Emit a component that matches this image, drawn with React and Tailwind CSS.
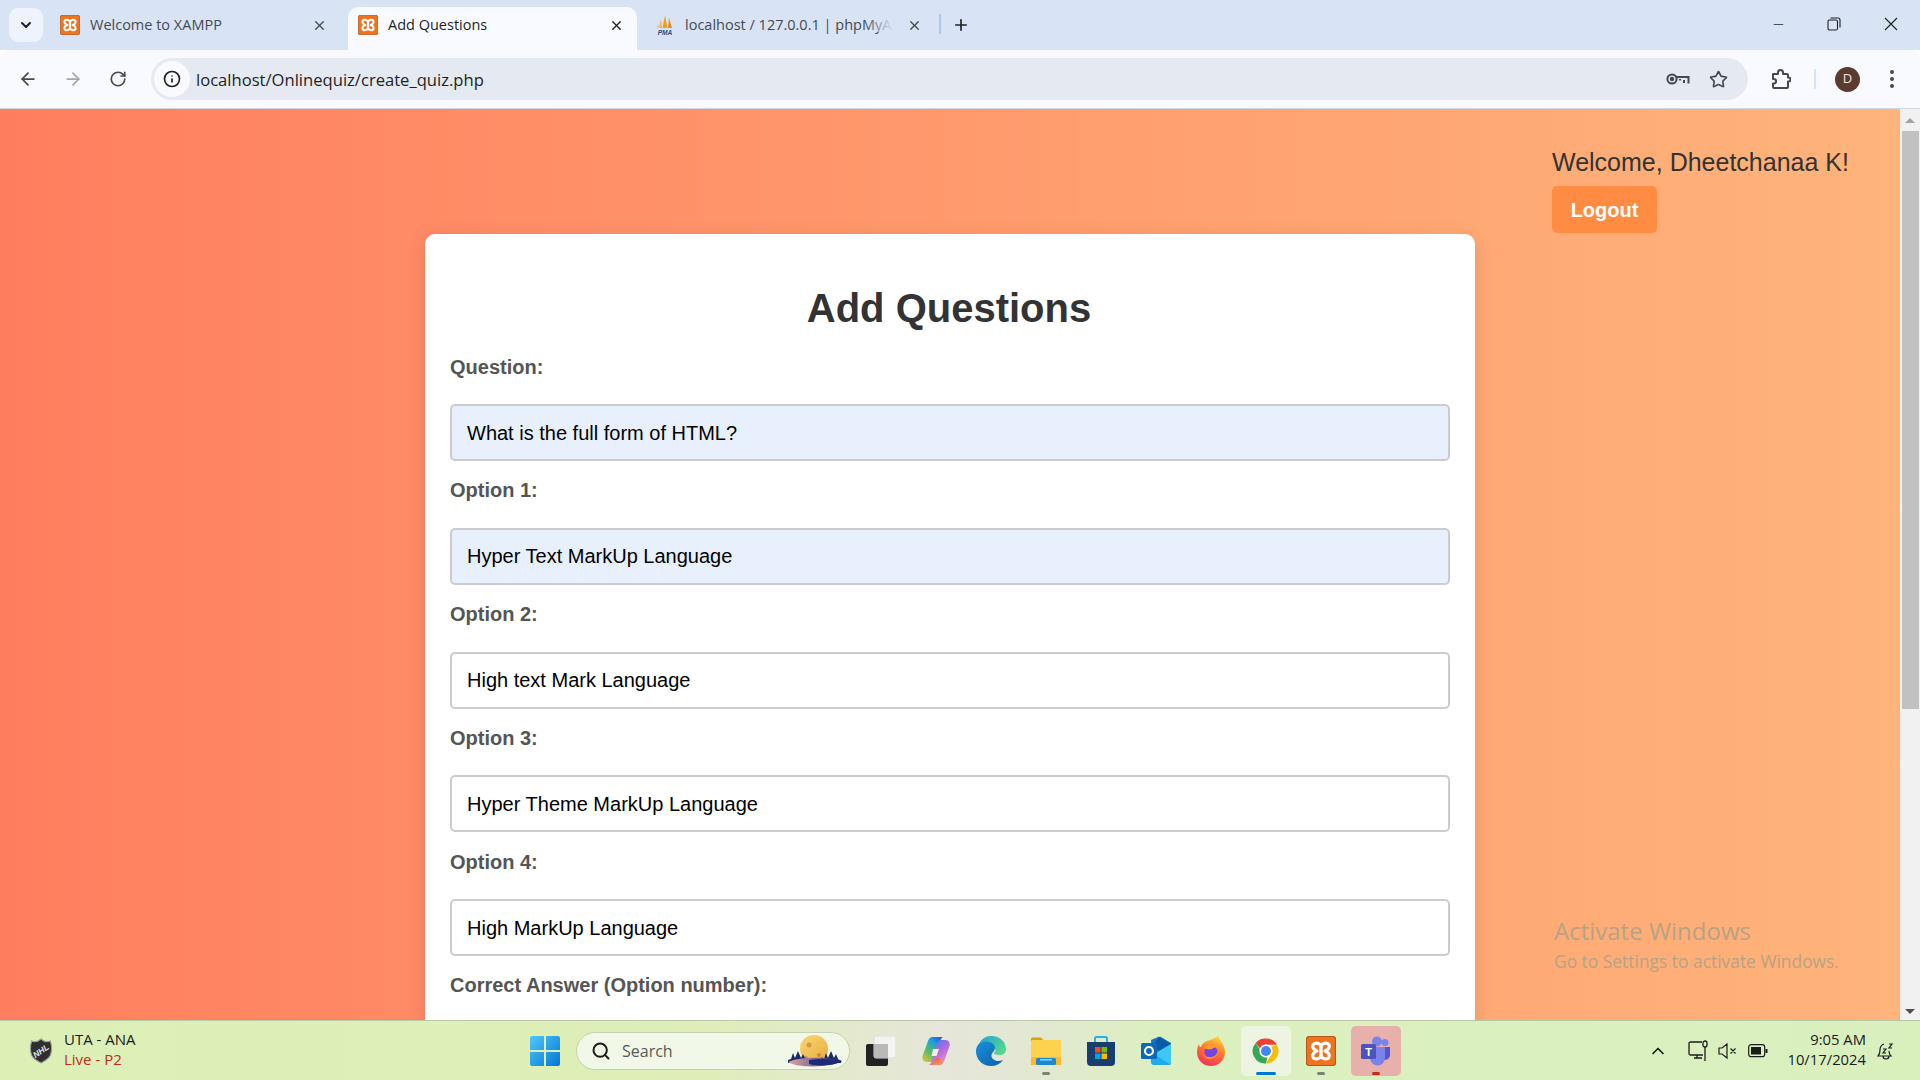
import React from "react";
import { ArrowLeft, ArrowRight, RotateCw, Info, Star, X, Plus, ChevronDown, ChevronUp, Search, Minus } from "lucide-react";

const XamppIcon = ({ size = 20 }) => (
  <svg width={size} height={size} viewBox="0 0 30 30">
    <rect x="0.5" y="0.5" width="29" height="29" rx="2.5" fill="#ee7420" />
    <rect x="0.5" y="0.5" width="29" height="29" rx="2.5" fill="none" stroke="#b5591c" strokeWidth="1.2" />
    <path d="M15 9.500C13 7 8.500 6 7 8.800 5.800 11.500 8 14 11 15 8 16 5.800 18.500 7 21.200 8.500 24 13 23 15 20.500 17 23 21.500 24 23 21.200 24.200 18.500 22 16 19 15 22 14 24.200 11.500 23 8.800 21.500 6 17 7 15 9.500Z" fill="none" stroke="#fff" strokeWidth="3.200" strokeLinejoin="round" />
    <path d="M15 9v12" stroke="#fff" strokeWidth="3.400" />
  </svg>
);

const PmaIcon = () => (
  <svg width="20" height="20" viewBox="0 0 20 20">
    <path d="M10 0l2.500 13h-5z" fill="#f29c1f" />
    <path d="M6 4L4 13h3z" fill="#f5b14a" />
    <path d="M14 3l3 10h-4z" fill="#e88a12" />
    <path d="M3 9l-1.500 4H4z" fill="#f7c272" />
    <text x="10" y="19.500" textAnchor="middle" fontSize="6.600" fontWeight="700" fontStyle="italic" fill="#24508a" fontFamily="Liberation Sans, sans-serif">PMA</text>
  </svg>
);

const Tab = ({ icon, title, active, fade, closeCls }) => (
  <div className={`relative flex items-center h-[43px] rounded-t-[10px] pl-[10px] pr-[13px] pb-[7px] ${active ? "bg-[#f8faff] text-[#1f1f1f]" : "text-[#454a52]"} w-[289px]`}>
    {icon}
    <div className={`ml-[10px] flex-1 overflow-hidden whitespace-nowrap text-[14.5px] ${fade ? "mr-[13px]" : ""}`}>{title}</div>
    {fade && <div className="absolute right-[41px] top-[3px] h-[22px] w-[28px] bg-gradient-to-r from-[#d8e4f6]/0 to-[#d8e4f6]" />}
    <X size={15} strokeWidth={2.2} className={closeCls} />
  </div>
);

const Field = ({ label, value, filled }) => (
  <div className="h-[123.8px] flex flex-col">
    <div className="h-[37px] flex items-center text-[20px] font-bold text-[#555555] leading-none mt-[-1px]">{label}</div>
    <div className={`mt-[19px] h-[57px] w-[1000px] shrink-0 rounded-[5px] border-2 border-[#cccccc] flex items-center px-[15px] text-[20px] text-[#000000] ${filled ? "bg-[#e8f0fe]" : "bg-white"}`}>{value}</div>
  </div>
);

const Indicator = ({ cls }) => <div className={`absolute bottom-[1px] left-1/2 -translate-x-1/2 h-[3px] rounded-full ${cls}`} />;

const TaskItem = ({ children, bg, ind }) => (
  <div className={`relative w-[50px] h-[50px] flex items-center justify-center rounded-[5px] mx-[2.5px] ${bg || ""}`}>
    {children}
    {ind && <Indicator cls={ind} />}
  </div>
);

export default function App() {
  return (
    <div className="w-[1920px] h-[1080px] overflow-hidden flex flex-col bg-white font-['Liberation_Sans',sans-serif]">
      {/* tab strip */}
      <div className="h-[50px] bg-[#d8e4f6] flex items-end font-['Open_Sans',sans-serif] shrink-0">
        <div className="self-start mt-[8px] ml-[9px] w-[34px] h-[34px] rounded-[9px] bg-[#eef3fd] flex items-center justify-center">
          <ChevronDown size={16} strokeWidth={3} className="text-[#1f1f1f]" />
        </div>
        <div className="ml-[7px]">
          <Tab icon={<XamppIcon />} title="Welcome to XAMPP" closeCls="text-[#454a52] mr-[-1px]" />
        </div>
        <div className="ml-[9px] w-[289px]">
          <Tab active icon={<XamppIcon />} title="Add Questions" closeCls="text-[#1f1f1f]" />
        </div>
        <div className="ml-[8px] flex items-center h-[43px]">
          <div className="w-[289px] shrink-0 -mr-[1px]">
            <Tab fade icon={<PmaIcon />} title="localhost / 127.0.0.1 | phpMyAdmin" closeCls="text-[#454a52] ml-[1px] mr-[-1px]" />
          </div>
        </div>
        <div className="self-start mt-[14px] ml-[6px] w-[2px] h-[20px] bg-[#a8c7fa]" />
        <Plus size={18} strokeWidth={2.2} className="self-start mt-[16px] ml-[11px] text-[#1f1f1f]" />
        <div className="flex-1" />
        <div className="self-start h-[50px] flex items-center text-[#1f1f1f]">
          <Minus size={15} strokeWidth={1.2} className="mr-[41px] mb-[2px]" />
          <svg width="14" height="14" viewBox="0 0 14 14" className="mr-[43px] mb-[2px]" fill="none" stroke="#1f1f1f" strokeWidth="1.1">
            <rect x="1" y="3" width="9.500" height="10" rx="1.600" />
            <path d="M3.500 1h7.500A2 2 0 0 1 13 3v7.500" />
          </svg>
          <svg width="14" height="14" viewBox="0 0 14 14" className="mr-[22px] mb-[2px]" stroke="#1f1f1f" strokeWidth="1.1"><path d="M1 1l12 12M13 1L1 13" /></svg>
        </div>
      </div>

      {/* toolbar */}
      <div className="h-[59px] bg-[#f8faff] rounded-t-[10px] border-b border-[#d3d7de] flex items-center shrink-0 font-['Open_Sans',sans-serif]">
        <ArrowLeft size={20} strokeWidth={2.1} className="ml-[18px] text-[#45494f]" />
        <ArrowRight size={20} strokeWidth={2.1} className="ml-[25px] text-[#a4a7ac]" />
        <RotateCw size={18} strokeWidth={2.2} className="ml-[26px] text-[#45494f]" />
        <div className="ml-[24px] w-[1597px] h-[42px] rounded-full bg-[#e4e9f2] flex items-center pl-[3px] pr-[20px]">
          <div className="w-[36px] h-[36px] rounded-full bg-[#f8faff] flex items-center justify-center">
            <Info size={18} strokeWidth={2.2} className="text-[#1f1f1f]" />
          </div>
          <div className="ml-[6px] pt-[2px] text-[16.6px] text-[#1f1f1f] flex-1">localhost/Onlinequiz/create_quiz.php</div>
          <svg width="24" height="14" viewBox="0 0 24 14" fill="none" stroke="#45494f" strokeWidth="2" className="mr-[19px]">
            <circle cx="6" cy="7" r="4.600" />
            <circle cx="6" cy="7" r="1.200" fill="#45494f" />
            <path d="M10.500 5h12v6.500M18 11V8M14 8.500V7" />
          </svg>
          <Star size={19} strokeWidth={2.1} className="text-[#45494f]" />
        </div>
        <svg width="20" height="20" viewBox="0 0 20 20" fill="none" stroke="#45494f" strokeWidth="2" className="ml-[23px]">
          <path d="M2 5H7V3.500a2.500 2.500 0 0 1 5 0V5h4a1 1 0 0 1 1 1v2.500h.5a2 2 0 0 1 0 4H17V18a1 1 0 0 1-1 1H3a1 1 0 0 1-1-1v-3.500h.8a2.200 2.200 0 0 0 0-4.500H2z" strokeLinejoin="round" />
        </svg>
        <div className="ml-[23px] w-[2px] h-[20px] bg-[#d3e3fd]" />
        <div className="ml-[19px] w-[25px] h-[25px] rounded-full bg-[#5b3a30] text-[#f0e6e0] text-[13px] flex items-center justify-center">D</div>
        <svg width="6" height="20" viewBox="0 0 6 20" fill="#45494f" className="ml-[29px]">
          <circle cx="3" cy="3" r="2" /><circle cx="3" cy="10" r="2" /><circle cx="3" cy="17" r="2" />
        </svg>
      </div>

      {/* page */}
      <div className="relative flex-1 flex min-h-0">
        <div className="w-[1900px] h-full overflow-hidden bg-gradient-to-r from-[#ff7e5f] to-[#feb47b]">
          <div className="flex flex-col items-end pr-[48px] pt-[38px] h-[125px]">
            <div className="w-[300px]">
              <div className="text-[25px] leading-[30px] text-[#333333]">Welcome, Dheetchanaa K!</div>
              <div className="mt-[9px] w-[105px] h-[47px] rounded-[5px] bg-[#ff8c42] text-white font-bold text-[20px] flex items-center justify-center">Logout</div>
            </div>
          </div>
          <div className="mx-auto w-[1050px] bg-white rounded-t-[10px] shadow-[0_4px_20px_rgba(0,0,0,0.1)] px-[25px] pt-[49px] min-h-[900px]">
            <h1 className="text-[40px] leading-[50px] font-bold text-[#333333] text-center mb-[16px] pr-[2px]">Add Questions</h1>
            <Field label="Question:" value="What is the full form of HTML?" filled />
            <Field label="Option 1:" value="Hyper Text MarkUp Language" filled />
            <Field label="Option 2:" value="High text Mark Language" />
            <Field label="Option 3:" value="Hyper Theme MarkUp Language" />
            <Field label="Option 4:" value="High MarkUp Language" />
            <Field label="Correct Answer (Option number):" value="" />
          </div>
        </div>
        <div className="w-[20px] h-full bg-[#f1f1f1] flex flex-col items-center">
          <div className="mt-[9px] w-0 h-0 border-x-[5px] border-x-transparent border-b-[5px] border-b-[#a3a3a3]" />
          <div className="mt-[8px] w-[17px] h-[578px] bg-[#c1c1c1]" />
          <div className="flex-1" />
          <div className="mb-[6px] w-0 h-0 border-x-[5px] border-x-transparent border-t-[5px] border-t-[#505050]" />
        </div>
        <div className="absolute left-[1554px] top-[806px] text-[#b8a284] font-['Open_Sans',sans-serif]">
          <div className="text-[24px] leading-[32px]">Activate Windows</div>
          <div className="text-[17.4px] leading-[20px] mt-[4px]">Go to Settings to activate Windows.</div>
        </div>
      </div>

      {/* taskbar */}
      <div className="h-[60px] shrink-0 border-t border-[#b9c6a8] bg-[linear-gradient(90deg,#dcf0b6_0%,#dfeeb8_36%,#e6e6da_49%,#e2e8d2_54%,#dcefc0_60%,#d9f0bd_100%)] flex items-center font-['Open_Sans',sans-serif] relative">
        <svg width="24" height="26" viewBox="0 0 26 28" className="ml-[29px]">
          <path d="M13 1c2 2 4 3 7 3 1 0 2 0 3-1 2 6 2 11 0 16-2 4-6 6-10 8-4-2-8-4-10-8C1 14 1 9 3 3c1 1 2 1 3 1 3 0 5-1 7-3z" fill="#2e2e2e" stroke="#9a9a9a" strokeWidth="1.200" />
          <text x="13" y="17" textAnchor="middle" fontSize="9" fontWeight="700" fontStyle="italic" fill="#e4e4e4" fontFamily="Liberation Sans, sans-serif" transform="rotate(-35 13 14)">NHL</text>
        </svg>
        <div className="ml-[11px] text-[15px] leading-[20px] w-[120px] -mt-[3px]">
          <div className="text-[#1b1b1b]">UTA - ANA</div>
          <div className="text-[#c42b1c]">Live - P2</div>
        </div>
        <svg width="30" height="30" viewBox="0 0 30 30" className="ml-[346px]">
          <defs>
            <linearGradient id="wl" x1="0" y1="0" x2="1" y2="1"><stop offset="0" stopColor="#4fc8fb" /><stop offset="1" stopColor="#0078d4" /></linearGradient>
          </defs>
          <path d="M0 2a2 2 0 0 1 2-2h12v14H0zM16 0h12a2 2 0 0 1 2 2v12H16zM0 16h14v14H2a2 2 0 0 1-2-2zM16 16h14v12a2 2 0 0 1-2 2H16z" fill="url(#wl)" />
        </svg>
        <div className="ml-[16px] w-[274px] h-[38px] rounded-full bg-[#f2f8e8] border border-[#c4d3ae] flex items-center relative">
          <Search size={20} strokeWidth={2.4} className="ml-[14px] text-[#1b1b1b]" />
          <span className="ml-[11px] text-[16px] text-[#555b55]">Search</span>
          <svg width="56" height="36" viewBox="0 0 56 36" className="absolute right-[6px] top-0">
            <defs>
              <linearGradient id="mn" x1="0" y1="0" x2="1" y2="1"><stop offset="0" stopColor="#f8d873" /><stop offset="1" stopColor="#e9a93f" /></linearGradient>
              <linearGradient id="gr" x1="0" y1="0" x2="1" y2="0"><stop offset="0" stopColor="#e8a39a" /><stop offset="0.5" stopColor="#7a6a9a" /><stop offset="1" stopColor="#1c2c74" /></linearGradient>
            </defs>
            <circle cx="27" cy="16" r="14" fill="url(#mn)" />
            <circle cx="22" cy="12" r="2.500" fill="#d89a3a" />
            <circle cx="35" cy="12" r="2.200" fill="#eec25f" />
            <circle cx="32" cy="22" r="2" fill="#d9853a" />
            <circle cx="19" cy="25" r="2" fill="#d9853a" />
            <path d="M1 27l3-1 2-6 2 5 3-7 3 7 2-4 3 6v3H1z" fill="#182a64" />
            <path d="M33 27l2-3 2 2 2-6 2 5 3-7 3 7 2-4 2 5 3 2v2H33z" fill="#182a64" />
            <path d="M1 29c14-6 40-5 54-1-8 6-44 8-54 1z" fill="url(#gr)" />
            <path d="M22 27c12-2 24-1 33 1-6 4-22 6-33 3z" fill="#1c2c74" />
          </svg>
        </div>
        <div className="ml-[3px] flex items-center">
          <TaskItem>
            <svg width="30" height="30" viewBox="0 0 30 30">
              <rect x="0" y="8" width="22" height="22" rx="2" fill="#222" />
              <rect x="8" y="0" width="22" height="22" rx="2" fill="#f6f6f6" fillOpacity="0.85" stroke="#ddd" />
              <rect x="8" y="8" width="14" height="14" fill="#b9b9b9" />
            </svg>
          </TaskItem>
          <TaskItem>
            <svg width="30" height="30" viewBox="0 0 30 30">
              <defs>
                <linearGradient id="c1" x1="0" y1="1" x2="0.7" y2="0"><stop offset="0" stopColor="#f4c72f" /><stop offset="0.4" stopColor="#5cbf5f" /><stop offset="0.8" stopColor="#1f9be0" /><stop offset="1" stopColor="#2566d8" /></linearGradient>
                <linearGradient id="c2" x1="0.2" y1="0" x2="0.8" y2="1"><stop offset="0" stopColor="#4a7ae8" /><stop offset="0.5" stopColor="#b86ae0" /><stop offset="1" stopColor="#f2a0c0" /></linearGradient>
                <linearGradient id="c3" x1="0" y1="0" x2="1" y2="1"><stop offset="0" stopColor="#e8503a" /><stop offset="1" stopColor="#f9a070" /></linearGradient>
              </defs>
              <path d="M19 1h-7C9 1 7.500 3 6.800 5.500L1.500 20c-1 3 1 6 4 6H10c2 0 3.500-1.500 4-3.500L19 6c.5-2.500 1.500-4 3-5z" fill="url(#c1)" />
              <path d="M11 29h7c3 0 4.500-2 5.500-4.500L28.500 10c1-3-1-6-4-6H20c-2 0-3.500 1.500-4 3.500L11 24c-.5 2.500-1.500 4-3 5z" fill="url(#c2)" />
              <path d="M8 29h10c1.500 0 3-.5 4-2l-4-5h-3l-2 3c-1 2-2 3.500-5 4z" fill="url(#c3)" />
              <path d="M12 13h6l-2.500 7h-5z" fill="#f8f2ee" />
            </svg>
          </TaskItem>
          <TaskItem>
            <svg width="30" height="30" viewBox="0 0 30 30">
              <defs>
                <linearGradient id="e1" x1="0" y1="0" x2="1" y2="0.6"><stop offset="0" stopColor="#1b9de2" /><stop offset="1" stopColor="#52d88a" /></linearGradient>
                <linearGradient id="e2" x1="0" y1="0" x2="1" y2="1"><stop offset="0" stopColor="#1a8fdc" /><stop offset="1" stopColor="#0f5fa8" /></linearGradient>
              </defs>
              <path d="M15 0C24 0 30 6 30 13c0 4-3 6-7 6-3 0-5-1-5-2 1-1 2-2 1-4-2-4-9-5-13-2-3 2-5 5-6 7C1 8 6 0 15 0z" fill="url(#e1)" />
              <path d="M0 15c0-7 7-11 13-9 6 1 7 6 5 9-2 2-4 5-1 8 2 2 6 3 10 1-3 4-7 6-12 6C7 30 0 24 0 15z" fill="url(#e2)" />
            </svg>
          </TaskItem>
          <TaskItem ind="w-[8px] bg-[#7c8272]">
            <svg width="30" height="30" viewBox="0 0 30 30">
              <path d="M0 3a1.500 1.500 0 0 1 1.500-1.500H10L13 5H0z" fill="#d9a010" />
              <rect x="0" y="4" width="30" height="25" rx="1.500" fill="#ffd24d" />
              <rect x="0" y="21" width="30" height="8" fill="#fdb92e" />
              <rect x="5" y="22" width="20" height="7" rx="1.500" fill="#1c88d4" />
              <rect x="9" y="23" width="12" height="1.600" fill="#7fd0f5" />
            </svg>
          </TaskItem>
          <TaskItem>
            <svg width="30" height="30" viewBox="0 0 30 30">
              <path d="M9 6V2.500A1.500 1.500 0 0 1 10.500 1h9A1.500 1.500 0 0 1 21 2.500V6" fill="none" stroke="#28b0e8" strokeWidth="2" />
              <path d="M1 6h28v20a4 4 0 0 1-4 4H5a4 4 0 0 1-4-4z" fill="#183e6e" />
              <rect x="9" y="11" width="5.500" height="5.500" fill="#ea4f20" />
              <rect x="15.500" y="11" width="5.500" height="5.500" fill="#7cb800" />
              <rect x="9" y="17.500" width="5.500" height="5.500" fill="#00a4ef" />
              <rect x="15.500" y="17.500" width="5.500" height="5.500" fill="#ffb900" />
            </svg>
          </TaskItem>
          <TaskItem>
            <svg width="30" height="30" viewBox="0 0 30 30">
              <path d="M10 4l7-3c1-.5 2-.5 3 0l10 6v19a3 3 0 0 1-3 3H12z" fill="#1277c9" />
              <path d="M18 1l12 7-12 7-7-5z" fill="#0a5aa5" />
              <path d="M13 18l17-10v18a3 3 0 0 1-3 3H13z" fill="#3cc8f5" />
              <path d="M10 20l3-2 17 11H13a3 3 0 0 1-3-3z" fill="#22a9ec" />
              <rect x="0" y="7" width="16" height="16" rx="1.500" fill="#0c68bc" />
              <circle cx="8" cy="15" r="4" fill="none" stroke="#fff" strokeWidth="2.200" />
            </svg>
          </TaskItem>
          <TaskItem>
            <svg width="30" height="30" viewBox="0 0 30 30">
              <defs>
                <linearGradient id="f1" x1="0.7" y1="0" x2="0.3" y2="1"><stop offset="0" stopColor="#ffd43a" /><stop offset="0.45" stopColor="#ff7a2a" /><stop offset="1" stopColor="#f0305e" /></linearGradient>
              </defs>
              <path d="M22 0c1 4 7 8 7 16 0 8-6 14-14 14S1 24 1 16c0-4 1-6 2-8 0 2 1 3 2 3 1-3 3-5 6-6 3-1 7-2 11-5z" fill="url(#f1)" />
              <circle cx="15" cy="16" r="6.500" fill="#7542e5" />
              <path d="M8 12c3-4 9-5 14-1-3 0-5 1-6 2-3 1-5 0-8-1z" fill="#ff9a2e" />
              <path d="M22 10c2 5 0 12-7 13-4 .5-8-2-9-6 2 3 5 4.500 9 4 5-.5 8-5 7-11z" fill="#ff8a2a" />
            </svg>
          </TaskItem>
          <TaskItem bg="bg-[#edf5e2]" ind="w-[20px] bg-[#0078d4]">
            <svg width="30" height="30" viewBox="0 0 48 48">
              <path d="M24 4a20 20 0 0 1 17.320 10H24a10 10 0 0 0-9.500 6.900L7.500 11A20 20 0 0 1 24 4z" fill="#ea4335" />
              <path d="M41.320 14A20 20 0 0 1 24 44l8.660-15A10 10 0 0 0 32 18z" fill="#fbbc04" />
              <path d="M24 44A20 20 0 0 1 7.500 11l8.700 15a10 10 0 0 0 10 8z" fill="#34a853" />
              <circle cx="24" cy="24" r="10.500" fill="#fff" />
              <circle cx="24" cy="24" r="8" fill="#4285f4" />
            </svg>
          </TaskItem>
          <TaskItem ind="w-[8px] bg-[#7c8272]">
            <XamppIcon size={30} />
          </TaskItem>
          <TaskItem bg="bg-[#e8b0aa]" ind="w-[8px] bg-[#c42b1c]">
            <svg width="30" height="30" viewBox="0 0 30 30">
              <circle cx="24" cy="6.500" r="3.500" fill="#7b83eb" />
              <path d="M19 11h10v8a5 5 0 0 1-10 0z" fill="#5059c9" />
              <circle cx="16" cy="5.500" r="5" fill="#7b83eb" />
              <path d="M9 11h15v11a7.500 7.500 0 0 1-15 0z" fill="#7b83eb" />
              <rect x="0" y="8" width="15" height="15" rx="1.500" fill="#4b53bc" />
              <text x="7.500" y="20" textAnchor="middle" fontSize="11" fontWeight="700" fill="#fff" fontFamily="Liberation Sans, sans-serif">T</text>
            </svg>
          </TaskItem>
        </div>
        <ChevronUp size={20} strokeWidth={2} className="ml-[245px] text-[#1b1b1b]" />
        <svg width="20" height="22" viewBox="0 0 20 22" fill="none" stroke="#1b1b1b" strokeWidth="1.300" className="ml-[20px]">
          <path d="M14 2H2.500A1.500 1.500 0 0 0 1 3.500v10A1.500 1.500 0 0 0 2.500 15H15M6 18h8M9 15v3" />
          <rect x="15" y="1" width="4" height="6" rx="2" />
          <path d="M17 7v14" />
        </svg>
        <svg width="20" height="16" viewBox="0 0 20 16" fill="none" stroke="#1b1b1b" strokeWidth="1.200" className="ml-[10px]">
          <path d="M1 5h3l5-4v14l-5-4H1zM12.500 5.500l5 5M17.500 5.500l-5 5" />
        </svg>
        <svg width="20" height="14" viewBox="0 0 20 14" className="ml-[10px]">
          <rect x="0.700" y="0.700" width="16" height="12" rx="2.500" fill="none" stroke="#1b1b1b" strokeWidth="1.200" />
          <rect x="3" y="3" width="10" height="7.500" fill="#1b1b1b" />
          <rect x="17.500" y="5" width="2" height="4" fill="#1b1b1b" />
        </svg>
        <div className="ml-[18px] w-[80px] text-right text-[14.8px] leading-[20px] text-[#1b1b1b] whitespace-nowrap -mt-[3px]">
          <div>9:05 AM</div>
          <div>10/17/2024</div>
        </div>
        <svg width="18" height="20" viewBox="0 0 18 20" fill="none" stroke="#1b1b1b" strokeWidth="1.200" className="ml-[11px]">
          <path d="M7 3C4 4 3 6 3 9c0 3-1 5-2 6h13c-1-1-2-2-2-5M6 15c0 2 1 3 3 3s3-1 3-3M6 8h3l-3 4h3M12 3h3l-3 4h3" />
        </svg>
      </div>
    </div>
  );
}
